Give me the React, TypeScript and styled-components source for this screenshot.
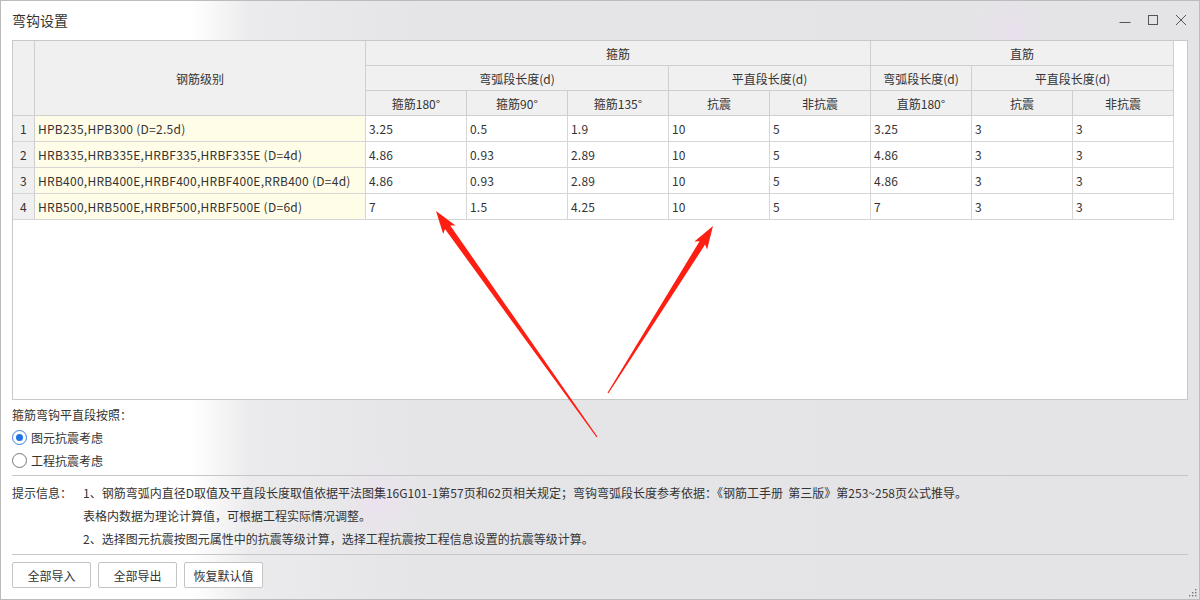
import React from "react";
import styled, { createGlobalStyle } from "styled-components";

const Global = createGlobalStyle`
  html, body { margin: 0; padding: 0; }
  body { font-family: "Microsoft YaHei", "Noto Sans CJK SC", "Noto Sans", sans-serif; color: #333; }
  * { box-sizing: border-box; }
`;

const Window = styled.div`
  position: relative;
  width: 1200px;
  height: 600px;
  border: 1px solid #bcbcbc;
  display: flex;
  flex-direction: column;
  overflow: hidden;
  background:
    radial-gradient(circle at 1010px 30px, rgba(235, 220, 240, 0.6), rgba(235, 220, 240, 0) 40px),
    radial-gradient(circle at 380px 500px, rgba(238, 222, 242, 0.7), rgba(238, 222, 242, 0) 40px),
    linear-gradient(to right, #ffffff 0px, #ffffff 190px, #ebebed 250px, #e5e5e7 420px, #e4e4e6 100%);
`;

const TitleBar = styled.div`
  height: 39px;
  display: flex;
  align-items: center;
  padding: 0 0 0 11px;
`;

const Title = styled.div`
  font-size: 14px;
  color: #333;
  flex: 1;
  margin-top: -2px;
`;

const WinButtons = styled.div`
  display: flex;
  align-items: center;
  margin-right: 4px;
  margin-top: -1px;
`;

const WinBtn = styled.div`
  width: 28px;
  height: 24px;
  display: flex;
  align-items: center;
  justify-content: center;
`;

const GridBox = styled.div`
  margin: 0 11px;
  height: 360px;
  border: 1px solid #c8c8c8;
  background: #fff;
  overflow: hidden;
`;

const Table = styled.table`
  border-collapse: separate;
  border-spacing: 0;
  table-layout: fixed;
  width: 1161px;
  font-size: 12px;
`;

const Th = styled.th`
  height: 25px;
  padding: 0;
  font-weight: normal;
  color: #333;
  background: #f0f0f0;
  border-right: 1px solid #cfcfcf;
  border-bottom: 1px solid #cfcfcf;
  text-align: center;
  white-space: nowrap;
`;

const Td = styled.td<{ $kind?: "num" | "name" | "data" }>`
  height: 26px;
  padding: 0 0 0 ${(p) => (p.$kind === "num" ? "0" : "3px")};
  border-right: 1px solid #d6d6d6;
  border-bottom: 1px solid #d6d6d6;
  white-space: nowrap;
  overflow: hidden;
  color: #333;
  letter-spacing: ${(p) => (p.$kind === "name" ? "0.27px" : "0.2px")};
  text-align: ${(p) => (p.$kind === "num" ? "center" : "left")};
  background: ${(p) =>
    p.$kind === "num" ? "#f0f0f0" : p.$kind === "name" ? "#fffde8" : "#fff"};
  border-right-color: ${(p) => (p.$kind === "num" ? "#cfcfcf" : "#d6d6d6")};
`;

const Section = styled.div`
  padding: 0 11px 3px;
  font-size: 12px;
  color: #333;
`;

const OptionTitle = styled.div`
  height: 23px;
  display: flex;
  align-items: center;
  margin-top: 3px;
`;

const RadioRow = styled.label`
  height: 23px;
  display: flex;
  align-items: center;
  gap: 4px;
`;

const RadioCircle = styled.span<{ $on?: boolean }>`
  width: 15px;
  height: 15px;
  border-radius: 50%;
  border: 1px solid ${(p) => (p.$on ? "#3b7ddd" : "#777")};
  background: #fff;
  display: flex;
  align-items: center;
  justify-content: center;
  &::after {
    content: "";
    width: 7px;
    height: 7px;
    border-radius: 50%;
    background: ${(p) => (p.$on ? "#1e73e8" : "transparent")};
  }
`;

const Divider = styled.div`
  height: 1px;
  background: #c6c6c6;
  margin: 0 11px;
`;

const Hints = styled.div`
  display: grid;
  grid-template-columns: 71px 1fr;
  padding: 5px 11px 4px;
  font-size: 12px;
  color: #333;
  line-height: 23px;
`;

const Buttons = styled.div`
  display: flex;
  gap: 7px;
  padding: 7px 11px 0;
`;

const Btn = styled.button`
  width: 79px;
  height: 26px;
  border: 1px solid #c4c4c4;
  border-radius: 2px;
  background: #fff;
  font-family: inherit;
  font-size: 12px;
  color: #333;
  padding: 0;
`;

const Overlay = styled.svg`
  position: absolute;
  left: -1px;
  top: -1px;
  pointer-events: none;
`;

const Grip = styled.svg`
  position: absolute;
  right: 2px;
  bottom: 2px;
`;

function arrow(tx: number, ty: number, px: number, py: number) {
  const dx = px - tx;
  const dy = py - ty;
  const L = Math.hypot(dx, dy);
  const ux = dx / L;
  const uy = dy / L;
  const nx = -uy;
  const ny = ux;
  const h = 20;
  const bx = px - ux * h;
  const by = py - uy * h;
  const b2x = px - ux * (h + 3);
  const b2y = py - uy * (h + 3);
  const pts = [
    [tx + nx * 0.6, ty + ny * 0.6],
    [bx + nx * 3.2, by + ny * 3.2],
    [b2x + nx * 7.5, b2y + ny * 7.5],
    [px, py],
    [b2x - nx * 7.5, b2y - ny * 7.5],
    [bx - nx * 3.2, by - ny * 3.2],
    [tx - nx * 0.6, ty - ny * 0.6],
  ];
  return pts.map((p) => p.map((v) => v.toFixed(1)).join(",")).join(" ");
}

const rows = [
  ["HPB235,HPB300 (D=2.5d)", "3.25", "0.5", "1.9", "10", "5", "3.25", "3", "3"],
  ["HRB335,HRB335E,HRBF335,HRBF335E (D=4d)", "4.86", "0.93", "2.89", "10", "5", "4.86", "3", "3"],
  ["HRB400,HRB400E,HRBF400,HRBF400E,RRB400 (D=4d)", "4.86", "0.93", "2.89", "10", "5", "4.86", "3", "3"],
  ["HRB500,HRB500E,HRBF500,HRBF500E (D=6d)", "7", "1.5", "4.25", "10", "5", "7", "3", "3"],
];

export default function App() {
  return (
    <>
      <Global />
      <Window>
        <TitleBar>
          <Title>弯钩设置</Title>
          <WinButtons>
            <WinBtn>
              <svg width="12" height="12" viewBox="0 0 12 12">
                <line x1="0.5" y1="8.5" x2="11.5" y2="8.5" stroke="#555" strokeWidth="1" />
              </svg>
            </WinBtn>
            <WinBtn>
              <svg width="12" height="12" viewBox="0 0 12 12">
                <rect x="1.5" y="1.5" width="9" height="9" fill="none" stroke="#555" strokeWidth="1" />
              </svg>
            </WinBtn>
            <WinBtn>
              <svg width="12" height="12" viewBox="0 0 12 12">
                <path d="M1 1 L11 11 M11 1 L1 11" stroke="#555" strokeWidth="1" />
              </svg>
            </WinBtn>
          </WinButtons>
        </TitleBar>

        <GridBox>
          <Table>
            <colgroup>
              <col style={{ width: 22 }} />
              <col style={{ width: 331 }} />
              {Array.from({ length: 8 }).map((_, i) => (
                <col key={i} style={{ width: 101 }} />
              ))}
            </colgroup>
            <thead>
              <tr>
                <Th rowSpan={3}></Th>
                <Th rowSpan={3}>钢筋级别</Th>
                <Th colSpan={5}>箍筋</Th>
                <Th colSpan={3}>直筋</Th>
              </tr>
              <tr>
                <Th colSpan={3}>弯弧段长度(d)</Th>
                <Th colSpan={2}>平直段长度(d)</Th>
                <Th>弯弧段长度(d)</Th>
                <Th colSpan={2}>平直段长度(d)</Th>
              </tr>
              <tr>
                <Th>箍筋180°</Th>
                <Th>箍筋90°</Th>
                <Th>箍筋135°</Th>
                <Th>抗震</Th>
                <Th>非抗震</Th>
                <Th>直筋180°</Th>
                <Th>抗震</Th>
                <Th>非抗震</Th>
              </tr>
            </thead>
            <tbody>
              {rows.map((r, i) => (
                <tr key={i}>
                  <Td $kind="num">{i + 1}</Td>
                  <Td $kind="name">{r[0]}</Td>
                  {r.slice(1).map((v, j) => (
                    <Td key={j} $kind="data">
                      {v}
                    </Td>
                  ))}
                </tr>
              ))}
            </tbody>
          </Table>
        </GridBox>

        <Section>
          <OptionTitle>箍筋弯钩平直段按照：</OptionTitle>
          <RadioRow>
            <RadioCircle $on />
            图元抗震考虑
          </RadioRow>
          <RadioRow>
            <RadioCircle />
            工程抗震考虑
          </RadioRow>
        </Section>
        <Divider />
        <Hints>
          <div>提示信息：</div>
          <div>
            <div>
              1、钢筋弯弧内直径D取值及平直段长度取值依据平法图集16G101-1第57页和62页相关规定；弯钩弯弧段长度参考依据：《钢筋工手册&nbsp;&nbsp;第三版》第253~258页公式推导。
            </div>
            <div>表格内数据为理论计算值，可根据工程实际情况调整。</div>
            <div>2、选择图元抗震按图元属性中的抗震等级计算，选择工程抗震按工程信息设置的抗震等级计算。</div>
          </div>
        </Hints>
        <Divider />
        <Buttons>
          <Btn>全部导入</Btn>
          <Btn>全部导出</Btn>
          <Btn>恢复默认值</Btn>
        </Buttons>

        <Overlay width="1200" height="600" viewBox="0 0 1200 600">
          <polygon points={arrow(597, 437, 436, 211)} fill="#fe1e12" />
          <polygon points={arrow(608, 393, 713, 226)} fill="#fe1e12" />
        </Overlay>
        <Grip width="8" height="8" viewBox="0 0 8 8">
          <g fill="#777">
            <rect x="6" y="0" width="1.4" height="1.4" />
            <rect x="3" y="3" width="1.4" height="1.4" />
            <rect x="6" y="3" width="1.4" height="1.4" />
            <rect x="0" y="6" width="1.4" height="1.4" />
            <rect x="3" y="6" width="1.4" height="1.4" />
            <rect x="6" y="6" width="1.4" height="1.4" />
          </g>
        </Grip>
      </Window>
    </>
  );
}
